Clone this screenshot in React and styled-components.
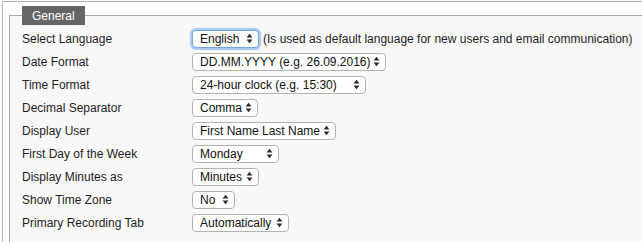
import React from "react"
import styled, { createGlobalStyle } from "styled-components"

const GlobalStyle = createGlobalStyle`
    html, body {
        margin: 0;
        padding: 0;
        background: #fff;
        overflow: hidden;
    }
    body {
        font-family: "Liberation Sans", Arial, Helvetica, sans-serif;
        font-size: 12px;
        color: #222;
    }
`

const Page = styled.div`
    width: 100vw;
    height: 100vh;
    overflow: hidden;
`

const Outer = styled.div`
    margin: 1px 0 0 2px;
    width: 700px;
    height: 260px;
    border-top: 1px solid #b4b4b4;
    border-left: 1px solid #b4b4b4;
    padding: 0 0 0 6px;
    box-sizing: border-box;
`

const Fieldset = styled.fieldset`
    margin: 4px 0 0 0;
    padding: 2px 0 20px 12px;
    border: 1px solid #a9a9a9;
    background: #f8f8f8;
    min-width: 0;
`

const Legend = styled.legend`
    background: #666;
    color: #fff;
    height: 19px;
    line-height: 20px;
    padding: 0 10px;
    font-size: 12px;
`

const Grid = styled.div`
    display: grid;
    grid-template-columns: 170px 1fr;
    grid-auto-rows: 23px;
    align-items: center;
`

const Label = styled.div`
    color: #1e1e1e;
    white-space: nowrap;
`

const Control = styled.div`
    display: flex;
    align-items: center;
    gap: 4px;
    white-space: nowrap;
`

const Select = styled.div`
    display: flex;
    align-items: center;
    justify-content: space-between;
    box-sizing: border-box;
    width: ${(p) => p.$w}px;
    height: 18px;
    padding: 0 5px 0 7px;
    background: #fff;
    border: 1px solid ${(p) => (p.$focus ? "#79a4e2" : "#b3b3b3")};
    border-radius: 4px;
    box-shadow: ${(p) => (p.$focus ? "0 0 1px 2px #a9c8f2" : "none")};
    color: #111;
    cursor: default;
`

const Hint = styled.span`
    color: #1e1e1e;
`

const Arrows = () => (
    <svg width="7" height="11" viewBox="0 0 7 11">
        <path d="M0.6 4.4 L3.5 0.8 L6.4 4.4 Z M0.6 6.6 L3.5 10.2 L6.4 6.6 Z" fill="#2a2a2a" />
    </svg>
)

const rows = [
    { label: "Select Language", value: "English", w: 67, focus: true, hint: "(Is used as default language for new users and email communication)" },
    { label: "Date Format", value: "DD.MM.YYYY (e.g. 26.09.2016)", w: 194 },
    { label: "Time Format", value: "24-hour clock (e.g. 15:30)", w: 174 },
    { label: "Decimal Separator", value: "Comma", w: 66 },
    { label: "Display User", value: "First Name Last Name", w: 144 },
    { label: "First Day of the Week", value: "Monday", w: 87 },
    { label: "Display Minutes as", value: "Minutes", w: 67 },
    { label: "Show Time Zone", value: "No", w: 43 },
    { label: "Primary Recording Tab", value: "Automatically", w: 97 },
]

const App = () => {
    return (
        <Page>
            <GlobalStyle />
            <Outer>
                <Fieldset>
                    <Legend>General</Legend>
                    <Grid>
                        {rows.map((r) => (
                            <React.Fragment key={r.label}>
                                <Label>{r.label}</Label>
                                <Control>
                                    <Select $w={r.w} $focus={r.focus}>
                                        <span>{r.value}</span>
                                        <Arrows />
                                    </Select>
                                    {r.hint && <Hint>{r.hint}</Hint>}
                                </Control>
                            </React.Fragment>
                        ))}
                    </Grid>
                </Fieldset>
            </Outer>
        </Page>
    )
}

export default App
